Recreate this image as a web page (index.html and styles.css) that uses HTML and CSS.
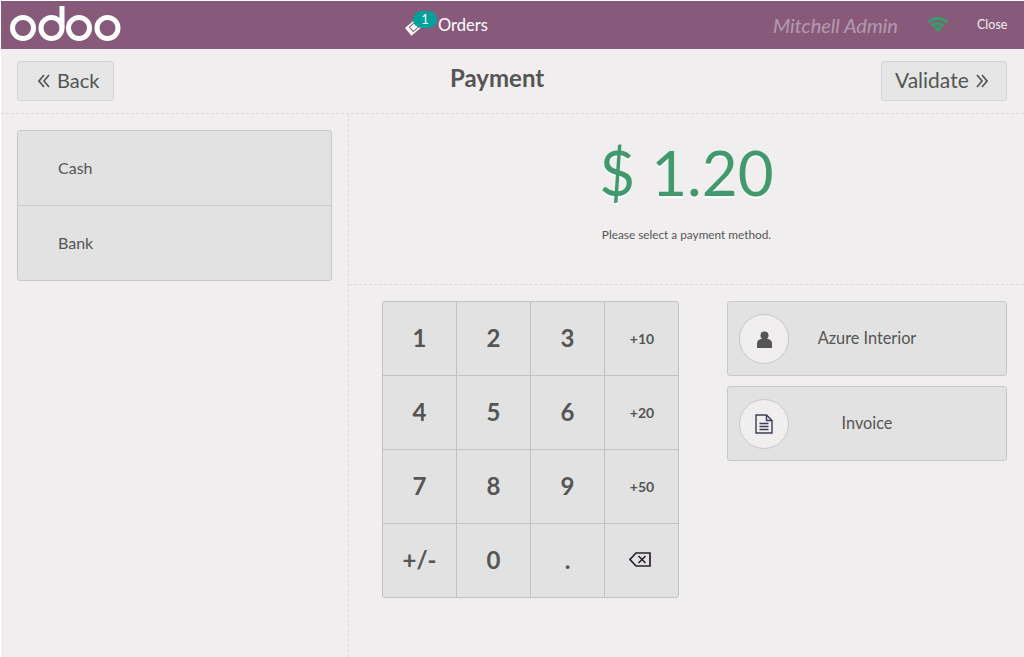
FILE: index.html
```html
<!DOCTYPE html>
<html lang="en">
<head>
    <meta charset="UTF-8">
    <meta name="viewport" content="width=device-width, initial-scale=1.0">
    <title>Point of Sale - Payment</title>
    <link rel="stylesheet" href="styles.css">
</head>
<body>
    <div class="pos">
        <div class="pos-topbar">
            <div class="logo">
                <svg width="112" height="36" viewBox="0 0 112 36">
                    <g fill="none" stroke="#fff" stroke-width="5">
                        <circle cx="13" cy="23" r="10.500"/>
                        <circle cx="41.500" cy="23" r="10.500"/>
                        <path d="M52 23V1"/>
                        <circle cx="69" cy="23" r="10.500"/>
                        <circle cx="97.500" cy="23" r="10.500"/>
                    </g>
                </svg>
            </div>
            <div class="orders">
                <svg class="ticket" width="20" height="20" viewBox="0 0 20 20">
                    <g transform="rotate(50 9 11)">
                        <rect x="4" y="3.500" width="10" height="15" fill="#fff"/>
                        <rect x="6" y="7.500" width="6" height="7" fill="none" stroke="#875a7b" stroke-width="1"/>
                    </g>
                </svg>
                <span class="orders-badge">1</span>
                <span class="orders-label">Orders</span>
            </div>
            <div class="cashier">Mitchell Admin</div>
            <div class="wifi">
                <svg width="22" height="16" viewBox="0 0 22 16">
                    <g fill="none" stroke="#3f9a6b" stroke-width="3.300">
                        <path d="M1.500 6.500C7 1 15 1 20.500 6.500"/>
                        <path d="M5 10c3.500-3 8.500-3 12 0"/>
                        <path d="M8 13.200c2-1.400 4-1.400 6 0"/>
                    </g>
                    <circle cx="11" cy="14.800" r="1.200" fill="#3f9a6b"/>
                </svg>
            </div>
            <div class="close-btn">Close</div>
        </div>

        <div class="screen-top">
            <div class="top-btn back-btn">
                <svg class="angles" width="12" height="14" viewBox="0 0 12 14">
                    <path d="M6 1L1 7l5 6M11 1L6 7l5 6" fill="none" stroke="#555" stroke-width="1.700"/>
                </svg>
                <span>Back</span>
            </div>
            <h1>Payment</h1>
            <div class="top-btn validate-btn">
                <span>Validate</span>
                <svg class="angles" width="12" height="14" viewBox="0 0 12 14">
                    <path d="M1 1l5 6-5 6M6 1l5 6-5 6" fill="none" stroke="#555" stroke-width="1.700"/>
                </svg>
            </div>
        </div>

        <div class="screen-main">
            <div class="left-col">
                <div class="methods">
                    <div class="method">Cash</div>
                    <div class="method">Bank</div>
                </div>
            </div>
            <div class="right-col">
                <div class="summary">
                    <div class="total">$ 1.20</div>
                    <div class="hint">Please select a payment method.</div>
                </div>
                <div class="controls">
                    <div class="numpad">
                        <div class="key">1</div>
                        <div class="key">2</div>
                        <div class="key">3</div>
                        <div class="key small">+10</div>
                        <div class="key">4</div>
                        <div class="key">5</div>
                        <div class="key">6</div>
                        <div class="key small">+20</div>
                        <div class="key">7</div>
                        <div class="key">8</div>
                        <div class="key">9</div>
                        <div class="key small">+50</div>
                        <div class="key">+/-</div>
                        <div class="key">0</div>
                        <div class="key">.</div>
                        <div class="key small backspace">
                            <svg width="22" height="15" viewBox="0 0 22 15">
                                <path d="M7 1h14v13H7L1 7.500z" fill="none" stroke="#2a2230" stroke-width="1.700"/>
                                <path d="M9.500 4l7 7M16.500 4l-7 7" stroke="#2a2230" stroke-width="1.700"/>
                            </svg>
                        </div>
                    </div>
                    <div class="extras">
                        <div class="extra">
                            <span class="circle">
                                <svg width="15" height="17" viewBox="0 0 15 17">
                                    <circle cx="7.500" cy="4.500" r="4" fill="#555"/>
                                    <path d="M0 17v-4.500C0 9.500 2.500 8 4.500 8h6c2 0 4.500 1.500 4.500 4.500V17z" fill="#555"/>
                                </svg>
                            </span>
                            <span class="extra-label">Azure Interior</span>
                        </div>
                        <div class="extra">
                            <span class="circle">
                                <svg width="18" height="20" viewBox="0 0 18 20">
                                    <path d="M1 1h10.500L17 6.500V19H1z" fill="none" stroke="#3c3c58" stroke-width="1.400"/>
                                    <path d="M11.500 1v5.500H17" fill="none" stroke="#3c3c58" stroke-width="1.400"/>
                                    <path d="M4.500 9.500h9M4.500 12.500h9M4.500 15.500h9" stroke="#3c3c58" stroke-width="1.400"/>
                                </svg>
                            </span>
                            <span class="extra-label">Invoice</span>
                        </div>
                    </div>
                </div>
            </div>
        </div>
    </div>
</body>
</html>
```

FILE: styles.css
```css
html, body { margin: 0; height: 100%; background: #fff; overflow: hidden; }
body { font-family: Lato, "Open Sans", sans-serif; color: #555; }
.pos { display: flex; flex-direction: column; height: 656px; margin: 1px 0 0 1px; background: #f0eeee; }

.pos-topbar { display: flex; align-items: center; height: 48px; flex: none; background: #875a7b; color: #fff; position: relative; }
.logo { width: 404px; padding-left: 9px; box-sizing: border-box; height: 48px; }
.logo svg { display: block; margin-top: 4px; }
.orders { position: relative; display: flex; align-items: center; height: 48px; }
.ticket { position: absolute; left: 0; top: 15px; }
.orders-badge { position: absolute; left: 8px; top: 10px; width: 24px; height: 17px; border-radius: 9px; background: #00a09d; font-size: 13px; line-height: 16px; text-align: center; }
.orders-label { margin-left: 33px; font-size: 16.5px; }
.cashier { position: absolute; left: 772px; top: 12px; font-size: 20px; font-style: italic; color: rgba(255,255,255,0.4); white-space: nowrap; }
.wifi { position: absolute; left: 926px; top: 15px; }
.wifi svg { display: block; }
.close-btn { position: absolute; left: 976px; top: 16px; font-size: 12.5px; color: #f0eeee; }

.screen-top { display: flex; align-items: center; justify-content: space-between; height: 65px; flex: none; padding: 0 17px 1px 16px; box-sizing: border-box; border-bottom: 1px dashed #dcdcdc; position: relative; }
.screen-top h1 { margin: 0; font-size: 24px; font-weight: 700; color: #555; position: absolute; left: 449px; top: 14px; line-height: 30px; }
.top-btn { display: flex; align-items: center; gap: 7px; height: 40px; box-sizing: border-box; border: 1px solid #d3d3d3; border-radius: 3px; background: #e6e6e6; font-size: 20px; color: #555; }
.top-btn span { padding-bottom: 2px; }
.back-btn { width: 97px; padding-left: 20px; }
.validate-btn { width: 126px; padding-left: 13px; font-size: 21px; }

.screen-main { display: flex; flex: 1; }
.left-col { width: 348px; flex: none; padding: 16px; box-sizing: border-box; border-right: 1px dashed #dcdcdc; }
.methods { width: 315px; box-sizing: border-box; border: 1px solid #c8c8c8; border-radius: 3px; background: #e2e2e2; }
.method { height: 74px; line-height: 74px; padding-left: 40px; font-size: 16px; }
.method + .method { border-top: 1px solid #c8c8c8; }

.right-col { flex: 1; }
.summary { height: 171px; box-sizing: border-box; border-bottom: 1px dashed #dcdcdc; text-align: center; padding-top: 19px; }
.total { font-size: 62px; line-height: 78px; color: #43996e; text-shadow: 0 2px #fff; }
.hint { font-size: 11.8px; margin-top: 16px; line-height: 16px; }

.controls { display: flex; padding: 16px 16px 0 33px; }
.numpad { display: grid; grid-template-columns: repeat(4, 74px); grid-template-rows: repeat(3, 74px) 73px; width: 297px; box-sizing: border-box; border: 1px solid #c2c2c2; border-radius: 3px; background: #e2e2e2; }
.key { display: flex; align-items: center; justify-content: center; box-sizing: border-box; padding-bottom: 2px; font-size: 24px; font-weight: 700; border-right: 1px solid #c2c2c2; border-bottom: 1px solid #c2c2c2; }
.key:nth-child(4n) { border-right: none; }
.key:nth-child(n+13) { border-bottom: none; }
.key.small { padding-bottom: 0; font-size: 14px; }
.key.backspace { padding-right: 4px; padding-bottom: 2px; }
.extras { margin-left: 48px; width: 280px; display: flex; flex-direction: column; gap: 10px; }
.extra { position: relative; height: 75px; box-sizing: border-box; padding-bottom: 2px; border: 1px solid #c8c8c8; border-radius: 3px; background: #e2e2e2; display: flex; align-items: center; justify-content: center; font-size: 16.3px; }
.circle { position: absolute; left: 11px; top: 12px; width: 50px; height: 50px; box-sizing: border-box; border: 1px solid #c8c8c8; border-radius: 50%; background: #f0eeee; display: flex; align-items: center; justify-content: center; }
```
